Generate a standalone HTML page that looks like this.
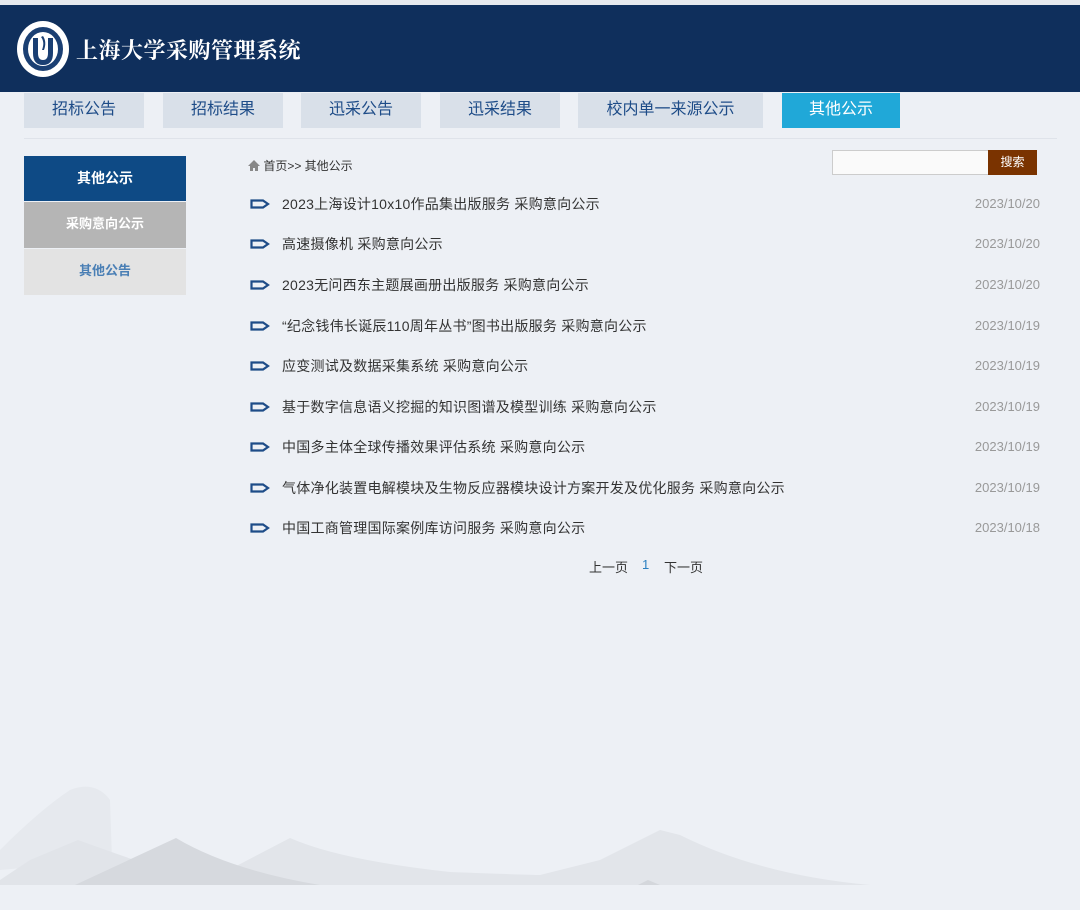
<!DOCTYPE html>
<html><head><meta charset="utf-8">
<style>
*{margin:0;padding:0;box-sizing:border-box}
body{width:1080px;height:910px;background:#edf0f5;font-family:"Liberation Sans","Noto Sans CJK SC",sans-serif;position:relative;overflow:hidden}
.top{position:absolute;left:0;top:0;width:1080px;height:5px;background:#e6e9ee}
.hdr{position:absolute;left:0;top:5px;width:1080px;height:87px;background:#0f2f5c}
.title{position:absolute;left:76px;top:29px;color:#fff;font-family:"Noto Serif CJK SC",serif;font-size:22px;font-weight:bold;letter-spacing:0.5px}
.tab{position:absolute;top:93px;height:35px;background:#d9e0e9;color:#1e4c88;font-size:16px;text-align:center;line-height:34px}
.tab.on{background:#20a8d8;color:#fff}
.line{position:absolute;left:24px;top:138px;width:1033px;height:1px;background:#dfe3ea}
.side{position:absolute;left:24px;width:162px;text-align:center;font-size:14px;font-weight:bold}
.bc{position:absolute;left:248px;top:157px;font-size:12px;color:#333}
.row{position:absolute;left:250px;width:790px;height:20px;font-size:14px;color:#333}
.row svg{position:absolute;left:0;top:4px}
.row .t{position:absolute;left:32px;top:0;line-height:20px;letter-spacing:0.25px}
.row .d{position:absolute;right:0;top:0;line-height:20px;font-size:13px;color:#999}
.pg{position:absolute;top:557px;font-size:13px;color:#333}
</style></head><body>
<div class="top"></div>
<div class="hdr">
<svg style="position:absolute;left:16px;top:15px" width="54" height="58" viewBox="0 0 54 58">
<ellipse cx="27" cy="29" rx="26" ry="28" fill="#fff"/>
<ellipse cx="27" cy="29" rx="20" ry="22" fill="#1a3f73"/>
<ellipse cx="27" cy="29" rx="15" ry="17" fill="#fff"/>
<path d="M17 18 V33 Q17 45 27 45 Q37 45 37 33 V18 H32 V33 Q32 40 27 40 Q22 40 22 33 V18Z" fill="#1a3f73"/>
<path d="M25 17 Q29 22 26 30 L28 30 Q31 22 27 16Z" fill="#1a3f73"/>
</svg>
<div class="title">上海大学采购管理系统</div>
</div>
<div class="tab" style="left:24px;width:120px">招标公告</div>
<div class="tab" style="left:163px;width:120px">招标结果</div>
<div class="tab" style="left:301px;width:120px">迅采公告</div>
<div class="tab" style="left:440px;width:120px">迅采结果</div>
<div class="tab" style="left:578px;width:185px">校内单一来源公示</div>
<div class="tab on" style="left:782px;width:118px">其他公示</div>
<div class="line"></div>
<div class="side" style="top:156px;height:45px;line-height:44px;background:#0e4a85;color:#fff">其他公示</div>
<div class="side" style="top:202px;height:46px;line-height:44px;background:#b5b5b5;color:#fff;font-size:13px">采购意向公示</div>
<div class="side" style="top:249px;height:46px;line-height:44px;background:#e3e3e3;color:#4a7fb5;font-size:13px">其他公告</div>
<div class="bc"><svg width="12" height="11" viewBox="0 0 12 11" style="vertical-align:-1px"><path d="M6 0 L12 6 H10 V11 H7 V8 H5 V11 H2 V6 H0Z" fill="#888"/></svg> 首页&gt;&gt; 其他公示</div>
<div style="position:absolute;left:832px;top:150px;width:157px;height:25px;background:#fafafa;border:1px solid #ccc"></div>
<div style="position:absolute;left:988px;top:150px;width:49px;height:25px;background:#7a3300;color:#fff;font-size:12px;text-align:center;line-height:25px">搜索</div>
<div class="row" style="top:194px"><svg width="20" height="12"><path d="M1.5 2.5 H13 L18 6 L13 9.5 H1.5Z" fill="none" stroke="#1e4c88" stroke-width="2.2"/></svg><span class="t">2023上海设计10x10作品集出版服务 采购意向公示</span><span class="d">2023/10/20</span></div>
<div class="row" style="top:234px"><svg width="20" height="12"><path d="M1.5 2.5 H13 L18 6 L13 9.5 H1.5Z" fill="none" stroke="#1e4c88" stroke-width="2.2"/></svg><span class="t">高速摄像机 采购意向公示</span><span class="d">2023/10/20</span></div>
<div class="row" style="top:275px"><svg width="20" height="12"><path d="M1.5 2.5 H13 L18 6 L13 9.5 H1.5Z" fill="none" stroke="#1e4c88" stroke-width="2.2"/></svg><span class="t">2023无问西东主题展画册出版服务 采购意向公示</span><span class="d">2023/10/20</span></div>
<div class="row" style="top:316px"><svg width="20" height="12"><path d="M1.5 2.5 H13 L18 6 L13 9.5 H1.5Z" fill="none" stroke="#1e4c88" stroke-width="2.2"/></svg><span class="t">“纪念钱伟长诞辰110周年丛书”图书出版服务 采购意向公示</span><span class="d">2023/10/19</span></div>
<div class="row" style="top:356px"><svg width="20" height="12"><path d="M1.5 2.5 H13 L18 6 L13 9.5 H1.5Z" fill="none" stroke="#1e4c88" stroke-width="2.2"/></svg><span class="t">应变测试及数据采集系统 采购意向公示</span><span class="d">2023/10/19</span></div>
<div class="row" style="top:397px"><svg width="20" height="12"><path d="M1.5 2.5 H13 L18 6 L13 9.5 H1.5Z" fill="none" stroke="#1e4c88" stroke-width="2.2"/></svg><span class="t">基于数字信息语义挖掘的知识图谱及模型训练 采购意向公示</span><span class="d">2023/10/19</span></div>
<div class="row" style="top:437px"><svg width="20" height="12"><path d="M1.5 2.5 H13 L18 6 L13 9.5 H1.5Z" fill="none" stroke="#1e4c88" stroke-width="2.2"/></svg><span class="t">中国多主体全球传播效果评估系统 采购意向公示</span><span class="d">2023/10/19</span></div>
<div class="row" style="top:478px"><svg width="20" height="12"><path d="M1.5 2.5 H13 L18 6 L13 9.5 H1.5Z" fill="none" stroke="#1e4c88" stroke-width="2.2"/></svg><span class="t">气体净化装置电解模块及生物反应器模块设计方案开发及优化服务 采购意向公示</span><span class="d">2023/10/19</span></div>
<div class="row" style="top:518px"><svg width="20" height="12"><path d="M1.5 2.5 H13 L18 6 L13 9.5 H1.5Z" fill="none" stroke="#1e4c88" stroke-width="2.2"/></svg><span class="t">中国工商管理国际案例库访问服务 采购意向公示</span><span class="d">2023/10/18</span></div>
<div class="pg" style="left:589px">上一页</div>
<div class="pg" style="left:642px;color:#2a7fc0">1</div>
<div class="pg" style="left:664px">下一页</div>
<svg style="position:absolute;left:0;top:780px" width="1080" height="110" viewBox="0 0 1080 110">
<path d="M0 70 Q40 30 70 10 Q95 0 110 20 L112 80 L0 90Z" fill="#e6e9ee"/>
<path d="M0 100 L30 80 L78 60 Q100 68 140 82 L140 105 L0 105Z" fill="#e1e4e9"/>
<path d="M200 105 L290 58 Q340 80 450 92 Q530 95 540 95 L600 80 L660 50 L680 55 Q760 95 870 105Z" fill="#e2e5ea"/>
<path d="M75 105 L176 58 Q230 90 320 105Z" fill="#d6d9de"/>
<path d="M638 105 L648 100 L660 105Z" fill="#d4d7dc"/>
</svg>
</body></html>
